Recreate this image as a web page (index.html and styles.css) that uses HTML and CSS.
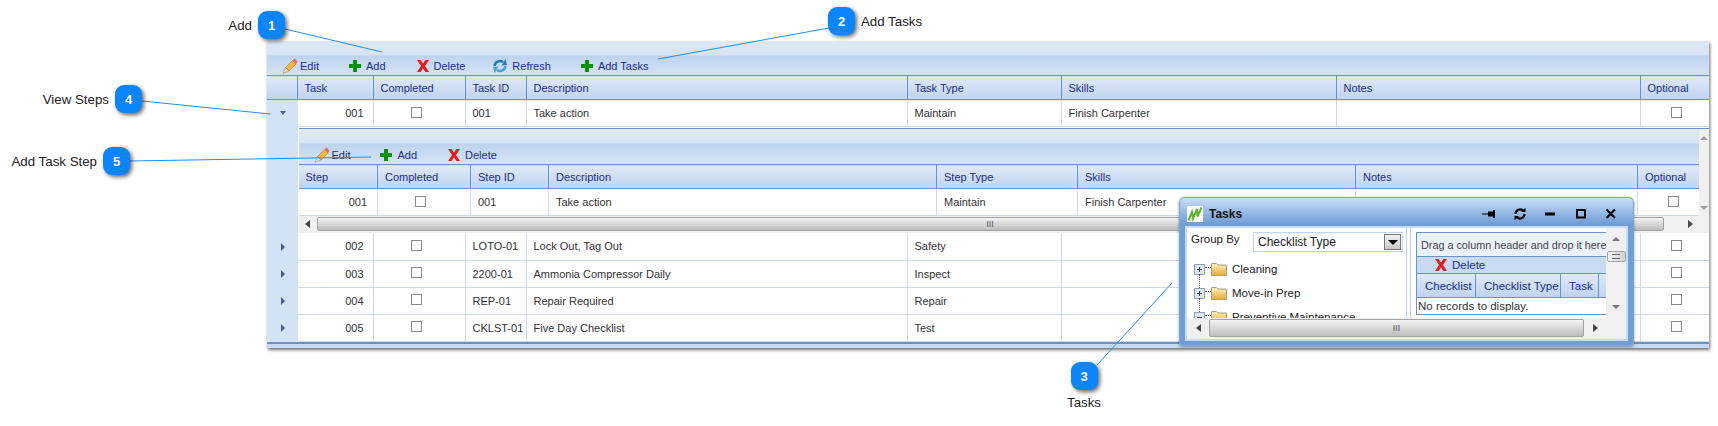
FILE: index.html
```html
<!DOCTYPE html>
<html lang="en">
<head>
  <meta charset="UTF-8">
  <title>Tasks</title>
  <link rel="stylesheet" href="styles.css">
</head>
<body>
<svg class="defs" width="0" height="0">
  <defs>
    <linearGradient id="folderFill" x1="0" y1="0" x2="0" y2="1">
      <stop offset="0" stop-color="#fff3bf"/>
      <stop offset="1" stop-color="#e8a92c"/>
    </linearGradient>
    <symbol id="ico-edit" viewBox="0 0 16 16">
      <path d="M3.500 9.500 10.500 2.500 14 6 7 13Z" fill="#f2b63c" stroke="#b07c28" stroke-width=".6"/>
      <path d="M10.500 2.500 12.500.5 15.500 3.500 14 6Z" fill="#d9705f"/>
      <path d="M3.500 9.500 7 13 1 15.500Z" fill="#f3dcb8" stroke="#8d7a60" stroke-width=".5"/>
    </symbol>
    <symbol id="ico-add" viewBox="0 0 12 12">
      <path d="M4 0h4v4h4v4H8v4H4V8H0V4h4Z" fill="#079207"/>
    </symbol>
    <symbol id="ico-del" viewBox="0 0 12 12">
      <path d="M0 0h3.500L6 3.500 8.500 0H12L8 6l4 6H8.500L6 8.500 3.500 12H0l4-6Z" fill="#dd1f1f"/>
    </symbol>
    <symbol id="ico-refresh" viewBox="0 0 16 16">
      <path d="M2.500 8a5.500 5.500 0 0 1 8.500-4" fill="none" stroke="#1f7db0" stroke-width="2.600"/>
      <path d="M9.500 7.500 15 7 13.500 1Z" fill="#1f7db0"/>
      <path d="M13.500 8a5.500 5.500 0 0 1-8.500 4" fill="none" stroke="#4aa0d0" stroke-width="2.600"/>
      <path d="M6.500 8.500 1 9 2.500 15Z" fill="#4aa0d0"/>
    </symbol>
    <symbol id="ico-folder" viewBox="0 0 16 14">
      <path d="M.5 3V1.500h5L7 3h8.500v10.500H.5Z" fill="url(#folderFill)" stroke="#a8a08a"/>
    </symbol>
    <symbol id="ico-plus" viewBox="0 0 11 11">
      <rect x=".5" y=".5" width="10" height="10" fill="#dfe8f2" stroke="#8ea2b8"/>
      <path d="M3 5.500h5M5.500 3v5" stroke="#33475c"/>
    </symbol>
    <symbol id="ico-minus" viewBox="0 0 11 11">
      <rect x=".5" y=".5" width="10" height="10" fill="#dfe8f2" stroke="#8ea2b8"/>
      <path d="M3 5.500h5" stroke="#33475c"/>
    </symbol>
  </defs>
</svg>

<div class="grid">
  <div class="toolbar">
    <span class="tool tool-edit"><svg class="ico16"><use href="#ico-edit"/></svg>Edit</span>
    <span class="tool tool-add"><svg class="ico12"><use href="#ico-add"/></svg>Add</span>
    <span class="tool tool-del"><svg class="ico12"><use href="#ico-del"/></svg>Delete</span>
    <span class="tool tool-ref"><svg class="ico16"><use href="#ico-refresh"/></svg>Refresh</span>
    <span class="tool"><svg class="ico12"><use href="#ico-add"/></svg>Add Tasks</span>
  </div>
  <table class="tbl tbl-main">
    <colgroup>
      <col class="c-h"><col class="c-task"><col class="c-comp"><col class="c-id"><col class="c-desc"><col class="c-type"><col class="c-skill"><col class="c-notes"><col>
    </colgroup>
    <thead>
      <tr>
        <th></th><th>Task</th><th>Completed</th><th>Task ID</th><th>Description</th><th>Task Type</th><th>Skills</th><th>Notes</th><th>Optional</th>
      </tr>
    </thead>
    <tbody>
      <tr>
        <td class="hier"><span class="arrow-down"></span></td>
        <td class="num">001</td><td class="chk"><span class="box"></span></td><td>001</td><td>Take action</td><td>Maintain</td><td>Finish Carpenter</td><td></td><td class="chk chk-opt"><span class="box"></span></td>
      </tr>
      <tr class="detail">
        <td class="hier"></td>
        <td colspan="8" class="detail-cell">
          <div class="nested">
            <div class="nested-main">
              <div class="toolbar toolbar-sub">
                <span class="tool tool-edit"><svg class="ico16"><use href="#ico-edit"/></svg>Edit</span>
                <span class="tool tool-add"><svg class="ico12"><use href="#ico-add"/></svg>Add</span>
                <span class="tool tool-del"><svg class="ico12"><use href="#ico-del"/></svg>Delete</span>
              </div>
              <table class="tbl tbl-sub">
                <colgroup>
                  <col class="s-step"><col class="s-comp"><col class="s-id"><col class="s-desc"><col class="s-type"><col class="s-skill"><col class="s-notes"><col>
                </colgroup>
                <thead>
                  <tr><th>Step</th><th>Completed</th><th>Step ID</th><th>Description</th><th>Step Type</th><th>Skills</th><th>Notes</th><th>Optional</th></tr>
                </thead>
                <tbody>
                  <tr>
                    <td class="num">001</td><td class="chk"><span class="box"></span></td><td>001</td><td>Take action</td><td>Maintain</td><td>Finish Carpenter</td><td></td><td class="chk chk-opt"><span class="box"></span></td>
                  </tr>
                </tbody>
              </table>
              <div class="hscroll">
                <span class="sb-btn"><span class="tri-left"></span></span>
                <span class="sb-thumb"><span class="grip">III</span></span>
                <span class="sb-btn sb-btn-end"><span class="tri-right"></span></span>
              </div>
            </div>
            <div class="vscroll-thin">
              <span class="tri-up"></span>
              <span class="tri-down"></span>
            </div>
          </div>
        </td>
      </tr>
      <tr>
        <td class="hier"><span class="arrow-right"></span></td>
        <td class="num">002</td><td class="chk"><span class="box"></span></td><td>LOTO-01</td><td>Lock Out, Tag Out</td><td>Safety</td><td></td><td></td><td class="chk chk-opt"><span class="box"></span></td>
      </tr>
      <tr>
        <td class="hier"><span class="arrow-right"></span></td>
        <td class="num">003</td><td class="chk"><span class="box"></span></td><td>2200-01</td><td>Ammonia Compressor Daily</td><td>Inspect</td><td></td><td></td><td class="chk chk-opt"><span class="box"></span></td>
      </tr>
      <tr>
        <td class="hier"><span class="arrow-right"></span></td>
        <td class="num">004</td><td class="chk"><span class="box"></span></td><td>REP-01</td><td>Repair Required</td><td>Repair</td><td></td><td></td><td class="chk chk-opt"><span class="box"></span></td>
      </tr>
      <tr>
        <td class="hier"><span class="arrow-right"></span></td>
        <td class="num">005</td><td class="chk"><span class="box"></span></td><td>CKLST-01</td><td>Five Day Checklist</td><td>Test</td><td></td><td></td><td class="chk chk-opt"><span class="box"></span></td>
      </tr>
    </tbody>
  </table>
  <div class="grid-foot"></div>
</div>

<!-- Tasks window floats over the grid -->
<div class="win">
  <div class="win-title">
    <svg class="win-logo" viewBox="0 0 16 16">
      <rect width="16" height="16" fill="#fff"/>
      <path d="M1.500 14.500 5 6 6 12.500 10 3 10.500 10.500 14.500 1.500" fill="none" stroke="#5db52c" stroke-width="2"/>
    </svg>
    <span class="win-name">Tasks</span>
    <span class="win-btns">
      <svg class="win-btn" viewBox="0 0 14 14"><path d="M0 6.500h6v1H0ZM6 4.500h5v5H6ZM11 3h2v8h-2Z" fill="#000"/></svg>
      <svg class="win-btn" viewBox="0 0 14 14"><path d="M2.500 7a4.500 4.500 0 0 1 8-2.800M11.500 7a4.500 4.500 0 0 1-8 2.800" fill="none" stroke="#000" stroke-width="2.200"/><path d="M8 5h4.500V.8ZM6 9H1.500v4.200Z" fill="#000"/></svg>
      <svg class="win-btn" viewBox="0 0 14 14"><rect x="2" y="5.500" width="10" height="3" fill="#000"/></svg>
      <svg class="win-btn" viewBox="0 0 14 14"><rect x="3" y="3" width="8" height="7.500" fill="none" stroke="#000" stroke-width="2"/></svg>
      <svg class="win-btn" viewBox="0 0 14 14"><path d="M2.500 2.500l8.500 8.500M11 2.500 2.500 11" stroke="#000" stroke-width="2.200"/></svg>
    </span>
  </div>
  <div class="win-body">
    <div class="win-panes">
      <div class="pane-left">
        <div class="group-by">
          <span class="group-label">Group By</span>
          <span class="select">Checklist Type<span class="select-btn"><span class="tri-sel"></span></span></span>
        </div>
        <ul class="tree">
          <li><svg class="pm"><use href="#ico-plus"/></svg><span class="dots"></span><svg class="folder"><use href="#ico-folder"/></svg>Cleaning</li>
          <li><svg class="pm"><use href="#ico-plus"/></svg><span class="dots"></span><svg class="folder"><use href="#ico-folder"/></svg>Move-in Prep</li>
          <li><svg class="pm"><use href="#ico-minus"/></svg><span class="dots"></span><svg class="folder"><use href="#ico-folder"/></svg>Preventive Maintenance</li>
        </ul>
      </div>
      <div class="pane-right">
        <div class="inner-grid">
          <div class="drag-band">Drag a column header and drop it here</div>
          <div class="inner-tools"><svg class="ico12"><use href="#ico-del"/></svg>Delete</div>
          <div class="inner-head">
            <span class="ih-a">Checklist</span><span class="ih-b">Checklist Type</span><span class="ih-c">Task</span><span></span>
          </div>
          <div class="inner-empty">No records to display.</div>
        </div>
      </div>
      <div class="vscroll">
        <span class="tri-up tri-dark"></span>
        <span class="v-thumb"><span class="v-grip"></span></span>
        <span class="tri-down tri-dark"></span>
      </div>
    </div>
    <div class="win-hscroll">
      <span class="wsb-btn"><span class="tri-left"></span></span>
      <span class="sb-thumb"><span class="grip">III</span></span>
      <span class="wsb-btn"><span class="tri-right"></span></span>
      <span class="wsb-corner"></span>
    </div>
  </div>
</div>

<!-- callouts sit on top of the screenshot -->
<svg class="leaders" width="1718" height="426">
  <path d="M285 29 382 52M829 28 658 59M1172 283 1097 365M142 101 270 114M130 161 371 157" stroke="#1e90ff" stroke-width="1" fill="none"/>
</svg>
<div class="call" id="c1"><span class="call-text">Add</span><span class="badge">1</span></div>
<div class="call" id="c2"><span class="badge">2</span><span class="call-text">Add Tasks</span></div>
<div class="call call-col" id="c3"><span class="badge">3</span><span class="call-text">Tasks</span></div>
<div class="call" id="c4"><span class="call-text">View Steps</span><span class="badge">4</span></div>
<div class="call" id="c5"><span class="call-text">Add Task Step</span><span class="badge">5</span></div>
</body>
</html>
```
FILE: styles.css
```css
* { box-sizing: border-box; }
html, body { height: 426px; overflow: hidden; }
body {
  margin: 0;
  background: #fff;
  font-family: "Liberation Sans", Arial, sans-serif;
  font-size: 11px;
  color: #333;
  position: relative;
}
.defs { position: absolute; }

.grid {
  margin: 41px 0 0 267px;
  width: 1442px;
  background: #d3e3f6;
  box-shadow: 1px 2px 3px rgba(0,0,0,0.55);
}
.toolbar {
  height: 34px;
  display: flex;
  align-items: center;
  padding: 16px 0 0 15px;
  background: linear-gradient(#dfe9f7 0, #d6e3f4 14px, #bfd3ef 15px, #d5e3f5 34px);
  color: #1a2c8a;
}
.toolbar-sub { height: 35px; }
.tool { display: flex; align-items: center; gap: 5px; margin-right: 31px; white-space: nowrap; }
.tool-edit { gap: 2px; margin-right: 30px; }
.tool-del { margin-right: 27px; }
.tool-ref { gap: 4px; margin-right: 30px; }
.ico16 { width: 16px; height: 16px; }
.ico12 { width: 12px; height: 12px; }

.tbl { border-collapse: collapse; table-layout: fixed; width: 100%; }
.tbl th {
  height: 24px;
  padding: 0 7px;
  text-align: left;
  font-weight: normal;
  color: #1a2c8a;
  background: linear-gradient(#dfe9f7, #bfd4f0);
  border: 1px solid #6a92c4;
  border-left: 0;
}
.tbl th:last-child { border-right: 0; }
.tbl td {
  height: 27px;
  padding: 0 7px;
  background: #fff;
  border-right: 1px solid #d0d9e8;
  border-bottom: 1px solid #d0d9e8;
  white-space: nowrap;
  overflow: hidden;
}
.tbl td:last-child { border-right: 0; }
.tbl .hier { background: #d3e3f6; padding: 0 0 0 12px; border-right: 1px solid #d3e3f6; border-bottom: 0; }
.tbl .num { text-align: right; padding-right: 9px; }
.tbl .chk { text-align: center; padding: 0 5px 3px 0; }
.tbl .chk-opt { padding: 0 0 3px 4px; }
.tbl-sub .num { padding-right: 10px; }
.tbl-sub .chk { padding-right: 7px; }
.tbl-sub .chk-opt { padding: 0 0 3px 11px; }

.c-h { width: 30px; }
.c-task { width: 76px; }
.c-comp { width: 92px; }
.c-id { width: 61px; }
.c-desc { width: 381px; }
.c-type { width: 154px; }
.c-skill { width: 275px; }
.c-notes { width: 304px; }

.s-step { width: 79px; }
.s-comp { width: 93px; }
.s-id { width: 78px; }
.s-desc { width: 388px; }
.s-type { width: 141px; }
.s-skill { width: 278px; }
.s-notes { width: 282px; }

.box {
  display: inline-block;
  width: 11px;
  height: 11px;
  border: 1px solid #8a8a8a;
  background: #fff;
  vertical-align: middle;
}
.arrow-down {
  display: block;
  width: 0; height: 0;
  margin-left: 1px;
  border: 3.5px solid transparent;
  border-top: 4px solid #4a5a8c;
  border-bottom: 0;
}
.arrow-right {
  display: block;
  width: 0; height: 0;
  margin-left: 2px;
  border: 4px solid transparent;
  border-left: 4px solid #4a5a8c;
  border-right: 0;
}

.tbl .detail-cell { height: 106px; padding: 1px 0 0 1px; border: 0; background: #fff; overflow: visible; }
.nested { display: flex; height: 105px; border-top: 1px solid #6a92c4; }
.nested-main { width: 1400px; }
.vscroll-thin {
  flex: 1;
  background: #f0f0f0;
  display: flex;
  flex-direction: column;
  align-items: center;
  gap: 66px;
  padding: 7px 0 0;
}
.tri-up, .tri-down { display: block; width: 0; height: 0; border: 4px solid transparent; }
.tri-up { border-bottom: 4px solid #a0a0a0; border-top: 0; }
.tri-down { border-top: 4px solid #a0a0a0; border-bottom: 0; }
.tri-dark.tri-up { border-bottom-color: #777; }
.tri-dark.tri-down { border-top-color: #777; }
.tri-left, .tri-right { display: block; width: 0; height: 0; border: 4px solid transparent; }
.tri-left { border-right: 5px solid #444; border-left: 0; }
.tri-right { border-left: 5px solid #444; border-right: 0; }

.hscroll {
  display: flex;
  align-items: stretch;
  height: 17px;
  padding: 1px 0 2px;
  background: #f0f0f0;
}
.sb-btn { width: 18px; display: flex; align-items: center; justify-content: center; }
.sb-btn-end { width: 35px; justify-content: flex-end; padding-right: 6px; }
.sb-thumb {
  flex: 1;
  display: flex;
  align-items: center;
  justify-content: center;
  border: 1px solid #a3a3a3;
  border-radius: 2px;
  background: linear-gradient(#f4f4f4, #d8d8d8 50%, #bcbcbc);
}
.grip { font-size: 9px; color: #555; letter-spacing: 0; line-height: 1; }

.grid-foot {
  height: 6px;
  border-top: 2px solid #6a92c4;
  background: #c6daf3;
}

.win {
  position: absolute;
  left: 1179px;
  top: 197px;
  width: 455px;
  height: 149px;
  padding: 0 5px 4px;
  border: 1px solid #7ea6da;
  border-radius: 5px 5px 3px 3px;
  background: linear-gradient(#c9ddf7 0, #6f9dd6 26px, #6f9dd6 100%);
  box-shadow: 0 1px 3px rgba(0,0,0,0.4);
}
.win-title { height: 28px; display: flex; align-items: center; padding: 3px 0 0 2px; }
.win-logo { width: 16px; height: 16px; margin-right: 6px; }
.win-name { font-size: 12px; font-weight: bold; color: #111; }
.win-btns { margin-left: auto; display: flex; gap: 16.500px; margin-right: 10px; }
.win-btn { width: 14px; height: 14px; }
.win-body {
  height: 115px;
  border: 2px solid #c8dcf8;
  background: #fff;
  display: flex;
  flex-direction: column;
}
.win-panes { display: flex; height: 90px; overflow: hidden; }
.pane-left {
  width: 220px;
  padding: 4px 3px 0 4px;
  border-right: 1px solid #c0d4ee;
  overflow: hidden;
  font-size: 11px;
  color: #222;
}
.group-by { display: flex; justify-content: space-between; }
.group-label { padding-top: 1px; font-size: 11.500px; }
.select {
  width: 150px;
  height: 20px;
  display: flex;
  align-items: center;
  justify-content: space-between;
  padding: 0 1px 0 4px;
  border: 1px solid #bcd3f5;
  font-size: 12px;
}
.select-btn {
  width: 17px;
  height: 16px;
  border: 1px solid #777;
  background: linear-gradient(#f2f2f2, #c8c8c8);
  display: flex;
  align-items: center;
  justify-content: center;
}
.tri-sel { width: 0; height: 0; border: 5px solid transparent; border-top: 5px solid #000; border-bottom: 0; }
.tree { list-style: none; margin: 5px 0 0; padding: 0 0 0 3px; font-size: 11.500px; }
.tree li { display: flex; align-items: center; height: 24px; white-space: nowrap; position: relative; }
.tree li:not(:last-child)::after {
  content: "";
  position: absolute;
  left: 5px;
  top: 17px;
  height: 14px;
  border-left: 1px dotted #555;
}
.pm { width: 11px; height: 11px; }
.dots { width: 6px; border-top: 1px dotted #555; margin-bottom: 3px; }
.folder { width: 16px; height: 14px; margin-right: 5px; }

.pane-right { flex: 0 0 196px; padding: 4px 0 0 5px; border-left: 1px solid #c0d4ee; margin-left: 3px; overflow: hidden; }
.inner-grid { width: 260px; height: 83px; border: 1px solid #6a92c4; font-size: 11.500px; }
.drag-band { height: 24px; line-height: 24px; padding-left: 4px; background: #eaf2fd; color: #444; white-space: nowrap; border-bottom: 1px solid #6a92c4; font-size: 10.800px; }
.inner-tools {
  height: 17px;
  display: flex;
  align-items: center;
  gap: 5px;
  padding: 0 0 1px 18px;
  color: #1a2c8a;
  background: #c9dbf3;
  border-bottom: 1px solid #6a92c4;
}
.inner-head {
  height: 24px;
  display: flex;
  background: linear-gradient(#dfe9f7, #bfd4f0);
  color: #1a2c8a;
  border-bottom: 1px solid #6a92c4;
  white-space: nowrap;
}
.inner-head span { display: flex; align-items: center; padding-left: 8px; border-right: 1px solid #6a92c4; }
.inner-head .ih-a { width: 59px; }
.inner-head .ih-b { width: 85px; }
.inner-head .ih-c { width: 38px; }
.inner-empty { height: 17px; line-height: 17px; padding-left: 1px; color: #333; }

.vscroll {
  flex: 1;
  background: #f0f0f0;
  display: flex;
  flex-direction: column;
  align-items: center;
  padding: 9px 0 0;
}
.v-thumb {
  flex: none;
  width: 19px;
  height: 11px;
  margin: 10px 0 43px;
  border: 1px solid #a3a3a3;
  border-radius: 2px;
  background: linear-gradient(90deg, #f4f4f4, #d0d0d0);
  display: flex;
  align-items: center;
  justify-content: center;
}
.v-grip { width: 8px; height: 5px; border-top: 1px solid #666; border-bottom: 1px solid #666; }
.win-hscroll { display: flex; height: 21px; padding: 1px 0 2px; background: #f0f0f0; }
.wsb-btn { width: 22px; display: flex; align-items: center; justify-content: center; }
.wsb-corner { width: 20px; }

/* callouts */
.leaders { position: absolute; left: 0; top: 0; pointer-events: none; }
.call {
  position: absolute;
  display: flex;
  align-items: center;
  gap: 6px;
  font-size: 13.300px;
  color: #222;
  white-space: nowrap;
}
.badge {
  width: 27px;
  height: 28px;
  border-radius: 9px;
  display: flex;
  align-items: center;
  justify-content: center;
  font-size: 13px;
  font-weight: bold;
  color: #fff;
  background: #0a84ff;
  box-shadow: 2px 2px 4px rgba(0,0,0,0.6);
}
#c1 { right: 1433px; top: 11px; }
#c2 { left: 828px; top: 7px; }
#c3 { left: 1050px; top: 362px; width: 68px; }
#c4 { right: 1576px; top: 85px; }
#c5 { right: 1588px; top: 147px; }
.call-col { flex-direction: column; gap: 5px; }
```
